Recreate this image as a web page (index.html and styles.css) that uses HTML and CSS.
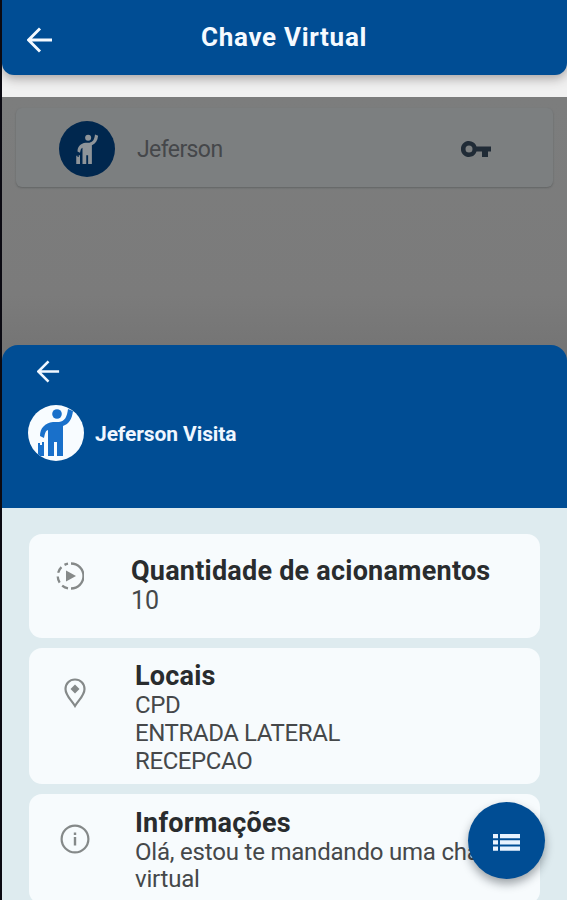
FILE: index.html
```html
<!DOCTYPE html>
<html lang="pt-BR">
<head>
<meta charset="utf-8">
<title>Chave Virtual</title>
<link rel="stylesheet" href="styles.css">
</head>
<body>
<svg width="0" height="0" class="defs">
  <symbol id="back" viewBox="0 0 26 26"><path d="M25 13H2M13 1.500 1.500 13 13 24.500" fill="none" stroke="currentColor" stroke-width="2.900"/></symbol>
  <symbol id="visitor" viewBox="0 0 56 56">
    <circle cx="29" cy="9" r="4.800"/>
    <path d="M40 4 45 6C44 14 41 19 35 21V51H29V37H26V51H20V25C17 26 17 29 16 33L12 31C12 23 17 18 25 17H31C37 16 39 12 40 4Z"/>
    <path d="M10 38H12V40H14V37H16V51H10Z"/>
  </symbol>
</svg>
<div class="screen">
  <header class="topbar">
    <svg class="topbar-back"><use href="#back"/></svg>
    <h1>Chave Virtual</h1>
  </header>
  <main class="dimmed">
    <div class="contact">
      <div class="contact-avatar"><svg viewBox="0 0 56 56"><use href="#visitor"/></svg></div>
      <span class="contact-name">Jeferson</span>
      <svg class="key" viewBox="0 0 30 18"><path d="M15.500 6.500A8 8 0 1 0 15.500 11.500H21V17H27V11.500H30V6.500ZM8 5.500A3.500 3.500 0 1 1 8 12.500 3.500 3.500 0 0 1 8 5.500Z" fill-rule="evenodd" fill="currentColor"/></svg>
    </div>
  </main>
  <section class="sheet">
    <div class="sheet-head">
      <svg class="sheet-back"><use href="#back"/></svg>
      <div class="person">
        <div class="person-avatar"><svg viewBox="0 0 56 56"><use href="#visitor"/></svg></div>
        <span class="person-name">Jeferson Visita</span>
      </div>
    </div>
    <div class="cards">
      <article class="card card-uses">
        <svg class="icon icon-play" viewBox="0 0 28 28"><path d="M15 1.500A12.500 12.500 0 0 1 15 26.500" fill="none" stroke="currentColor" stroke-width="2.300"/><path d="M12 26.300A12.500 12.500 0 0 1 12 1.700" fill="none" stroke="currentColor" stroke-width="2.300" stroke-dasharray="6.500 3.800"/><path d="M10 8.500 20 14 10 19.500Z" fill="currentColor"/></svg>
        <div><h2>Quantidade de acionamentos</h2><p class="count">10</p></div>
      </article>
      <article class="card card-places">
        <svg class="icon icon-pin" viewBox="0 0 22 30"><path d="M11 1.500C5.500 1.500 1.500 5.500 1.500 11 1.500 17.500 7 21.500 11 28 15 21.500 20.500 17.500 20.500 11 20.500 5.500 16.500 1.500 11 1.500Z" fill="none" stroke="currentColor" stroke-width="2.200"/><path d="M11 6.500 15.500 11 11 15.500 6.500 11Z" fill="currentColor"/></svg>
        <div><h2>Locais</h2><p>CPD</p><p>ENTRADA LATERAL</p><p>RECEPCAO</p></div>
      </article>
      <article class="card card-info">
        <svg class="icon icon-info" viewBox="0 0 30 30"><circle cx="15" cy="15" r="13.400" fill="none" stroke="currentColor" stroke-width="2.200"/><path d="M15 8.500V11M15 13V21.500" stroke="currentColor" stroke-width="2.400"/></svg>
        <div><h2>Informações</h2><p>Olá, estou te mandando uma chave<br>virtual</p></div>
      </article>
    </div>
  </section>
  <button class="fab" aria-label="Menu"><svg viewBox="0 0 27 17"><path d="M0 0H5V4.300H0ZM7 0H27V4.300H7ZM0 6.200H5V10.500H0ZM7 6.200H27V10.500H7ZM0 12.400H5V16.700H0ZM7 12.400H27V16.700H7Z" fill="currentColor"/></svg></button>
</div>
</body>
</html>
```
FILE: styles.css
```css
* { box-sizing: border-box; }
body { margin: 0; background: #0b0a12; font-family: Roboto, sans-serif; }
h1, h2, p { margin: 0; white-space: nowrap; }
svg { display: block; flex: none; }
.defs { position: absolute; }
.screen { position: relative; height: 900px; margin-left: 2px; overflow: hidden; display: flex; flex-direction: column; background: #f1f1f1; }
.topbar { height: 75px; margin-bottom: 22px; flex: none; background: #004d94; border-radius: 0 0 12px 12px; box-shadow: 0 3px 12px rgba(60, 50, 50, .45); display: grid; grid-template-columns: 199px auto; color: #f5faff; }
.topbar-back { width: 26px; height: 26px; margin: 27px 0 0 25px; }
.topbar h1 { font-size: 26px; line-height: 30px; padding-top: 22px; letter-spacing: .7px; }
.dimmed { position: relative; height: 248px; flex: none; padding: 11px 14px; background: linear-gradient(#7c7d7d, #7b7b7b 80%, #757575); }
.contact { height: 79px; border-radius: 6px; background: #7c7f80; box-shadow: 0 1px 2px rgba(50, 55, 55, .35); display: flex; align-items: center; padding: 3px 62px 0 43px; color: #45474a; }
.contact-avatar { width: 56px; height: 56px; border-radius: 50%; background: #00274e; display: grid; place-items: center; fill: #8e9499; }
.contact-avatar svg { width: 35px; height: 35px; }
.contact-name { margin-left: 22px; padding-top: 2px; font-size: 23px; line-height: 28px; letter-spacing: -.6px; }
.key { width: 30px; height: 18px; margin-left: auto; color: #202b36; }
.sheet { flex: 1; display: flex; flex-direction: column; background: #757575; }
.sheet-head { height: 163px; flex: none; background: #004d94; border-radius: 16px 16px 0 0; padding: 15px 26px; color: #f0f7ff; }
.sheet-back { width: 23px; height: 23px; margin-left: 9px; }
.person { display: flex; align-items: center; margin-top: 22px; }
.person-avatar { width: 56px; height: 56px; border-radius: 50%; overflow: hidden; background: #f8fcff; fill: #1970ca; }
.person-avatar svg { width: 56px; height: 56px; }
.person-name { font-size: 21px; line-height: 26px; font-weight: 700; margin-left: 11px; padding-top: 1px; letter-spacing: -.1px; }
.cards { flex: 1; background: #deebef; padding: 26px 27px 0 27px; display: flex; flex-direction: column; gap: 10px; }
.card { flex: none; border-radius: 13px; background: #f7fbfd; display: grid; color: #45484a; font-size: 24px; line-height: 28px; }
.card h2 { font-size: 27px; line-height: 30px; font-weight: 700; color: #292c2e; letter-spacing: .22px; }
.card-uses { height: 104px; grid-template-columns: 102px auto; padding-top: 22px; }
.card-places { height: 136px; grid-template-columns: 106px auto; padding-top: 13px; }
.card-places p { letter-spacing: -.4px; }
.card-info { height: 110px; grid-template-columns: 106px auto; padding-top: 14px; }
.icon { color: #858989; }
.icon-play { width: 28px; height: 28px; margin: 6px 0 0 27px; }
.icon-pin { width: 22px; height: 30px; margin: 17px 0 0 35px; }
.icon-info { width: 30px; height: 30px; margin: 16px 0 0 31px; }
.count { font-size: 25px; padding-top: 1px; }
.card-info p { line-height: 27px; padding-top: 1px; letter-spacing: -.2px; }
.fab { position: absolute; left: 466px; top: 802px; width: 77px; height: 77px; padding: 0; border: 0; border-radius: 50%; background: #004d94; color: #e9f3ff; box-shadow: 0 5px 10px rgba(20, 30, 40, .4); display: grid; place-items: center; }
.fab svg { width: 27px; height: 17px; margin-top: 3px; }
```
